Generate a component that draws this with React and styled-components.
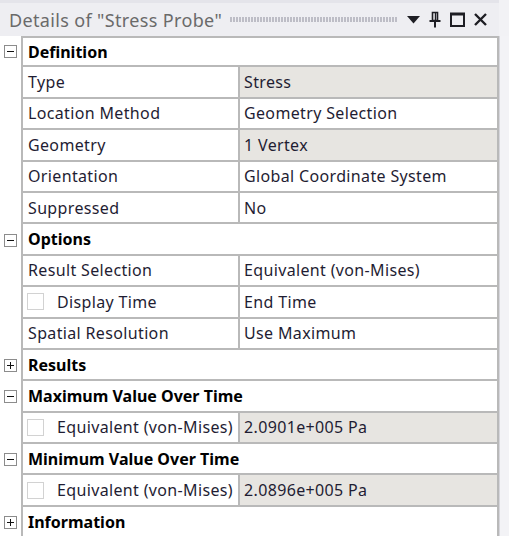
import React from "react";
import styled, { createGlobalStyle } from "styled-components";

const Global = createGlobalStyle`
  html, body { margin: 0; padding: 0; background: #ffffff; }
  body { font-family: "Noto Sans", "Open Sans", sans-serif; }
`;

const Panel = styled.div`
  width: 509px;
  height: 536px;
  overflow: hidden;
  display: flex;
  flex-direction: column;
  background: #f2f2f5;
`;

const TitleBar = styled.div`
  height: 36px;
  box-sizing: border-box;
  border-top: 3px solid #e4e4ea;
  display: flex;
  align-items: center;
  padding-left: 9px;
  width: 499px;
  background: #eeeef2;
`;

const Title = styled.div`
  font-size: 18px;
  color: #6a6a6a;
  white-space: nowrap;
  letter-spacing: 0.35px;
`;

const Grip = styled.div`
  flex: 1;
  height: 5px;
  margin: 0 9px 0 8px;
  background-image: radial-gradient(circle at 1px 1px, #bdbdc6 0.75px, transparent 1px);
  background-size: 3px 2px;
`;

const Icons = styled.div`
  display: flex;
  align-items: center;
  gap: 9px;
  padding-right: 12px;
  color: #1e1e24;
`;

const Body = styled.div`
  flex: 1;
  display: flex;
  min-height: 0;
`;

const Table = styled.div`
  width: 499px;
  display: flex;
  flex-direction: column;
  background: #ffffff;
`;

const Side = styled.div`
  flex: 1;
  background: #f3f3f6;
  border-left: 1px solid #d6d6dc;
`;

const Row = styled.div`
  display: flex;
  height: 31.4px;
  flex-shrink: 0;
`;

const Gutter = styled.div`
  width: 21px;
  flex-shrink: 0;
  display: flex;
  align-items: center;
  padding-left: 4px;
  box-sizing: border-box;
  background: #ffffff;
`;

const Toggle = styled.div`
  width: 13px;
  height: 13px;
  box-sizing: border-box;
  border: 1px solid #8c8c8c;
  background: #ffffff;
  position: relative;
  &::before {
    content: "";
    position: absolute;
    left: 2px;
    right: 2px;
    top: 5px;
    height: 1px;
    background: #111;
  }
  &::after {
    content: "";
    position: absolute;
    top: 2px;
    bottom: 2px;
    left: 5px;
    width: 1px;
    background: #111;
    display: ${(p) => (p.$open ? "none" : "block")};
  }
`;

const Cells = styled.div`
  flex: 1;
  display: flex;
  border-left: 2px solid #b9b9b9;
  border-right: 2px solid #b9b9b9;
  border-bottom: 2px solid #b9b9b9;
  border-top: ${(p) => (p.$first ? "2px solid #b9b9b9" : "none")};
  box-sizing: border-box;
  min-width: 0;
`;

const HeaderCell = styled.div`
  flex: 1;
  display: flex;
  align-items: center;
  padding-left: 5px;
  font-weight: 700;
  font-size: 16px;
  color: #000;
  background: #ffffff;
  white-space: nowrap;
`;

const Label = styled.div`
  width: 217px;
  flex-shrink: 0;
  display: flex;
  align-items: center;
  padding-left: ${(p) => (p.$check ? "4px" : "5px")};
  box-sizing: border-box;
  border-right: 2px solid #b9b9b9;
  font-size: 16px;
  letter-spacing: 0.35px;
  color: #1f1d33;
  white-space: nowrap;
`;

const Check = styled.span`
  width: 17px;
  height: 17px;
  box-sizing: border-box;
  border: 1px solid #d2d2d2;
  background: #fff;
  margin-right: 13px;
  flex-shrink: 0;
`;

const Value = styled.div`
  flex: 1;
  display: flex;
  align-items: center;
  padding-left: 4px;
  font-size: 16px;
  letter-spacing: 0.35px;
  color: #1f1d33;
  background: ${(p) => (p.$shaded ? "#e7e5e1" : "#ffffff")};
  white-space: nowrap;
`;

const rows = [
  { h: "Definition", open: true },
  { l: "Type", v: "Stress", s: true },
  { l: "Location Method", v: "Geometry Selection" },
  { l: "Geometry", v: "1 Vertex", s: true },
  { l: "Orientation", v: "Global Coordinate System" },
  { l: "Suppressed", v: "No" },
  { h: "Options", open: true },
  { l: "Result Selection", v: "Equivalent (von-Mises)" },
  { l: "Display Time", v: "End Time", c: true },
  { l: "Spatial Resolution", v: "Use Maximum" },
  { h: "Results", open: false },
  { h: "Maximum Value Over Time", open: true },
  { l: "Equivalent (von-Mises)", v: "2.0901e+005 Pa", s: true, c: true },
  { h: "Minimum Value Over Time", open: true },
  { l: "Equivalent (von-Mises)", v: "2.0896e+005 Pa", s: true, c: true },
  { h: "Information", open: false },
];

function Pin() {
  return (
    <svg width="12" height="17" viewBox="0 0 12 17" fill="none" stroke="currentColor">
      <path d="M3.5 1.5h5v8h-5z" strokeWidth="1.6" />
      <path d="M6.5 2v7" strokeWidth="1.4" />
      <path d="M0.5 10h11" strokeWidth="2" />
      <path d="M6 10v6.5" strokeWidth="2" />
    </svg>
  );
}

export default function App() {
  return (
    <>
      <Global />
      <Panel>
        <TitleBar>
          <Title>Details of "Stress Probe"</Title>
          <Grip />
          <Icons>
            <svg width="13" height="8" viewBox="0 0 13 8">
              <path d="M0 0h13L6.5 7.5z" fill="currentColor" />
            </svg>
            <Pin />
            <svg width="15" height="15" viewBox="0 0 15 15" fill="none" stroke="currentColor">
              <rect x="1" y="1.5" width="13" height="12.5" strokeWidth="2" />
              <path d="M1 2.5h13" strokeWidth="2" />
            </svg>
            <svg width="13" height="13" viewBox="0 0 13 13" stroke="currentColor" strokeWidth="2.4">
              <path d="M1 1l11 11M12 1L1 12" />
            </svg>
          </Icons>
        </TitleBar>
        <Body>
          <Table>
            {rows.map((r, i) => (
              <Row key={i}>
                <Gutter>{r.h && <Toggle $open={r.open} />}</Gutter>
                <Cells $first={i === 0}>
                  {r.h ? (
                    <HeaderCell>{r.h}</HeaderCell>
                  ) : (
                    <>
                      <Label $check={r.c}>
                        {r.c && <Check />}
                        {r.l}
                      </Label>
                      <Value $shaded={r.s}>{r.v}</Value>
                    </>
                  )}
                </Cells>
              </Row>
            ))}
          </Table>
          <Side />
        </Body>
      </Panel>
    </>
  );
}
